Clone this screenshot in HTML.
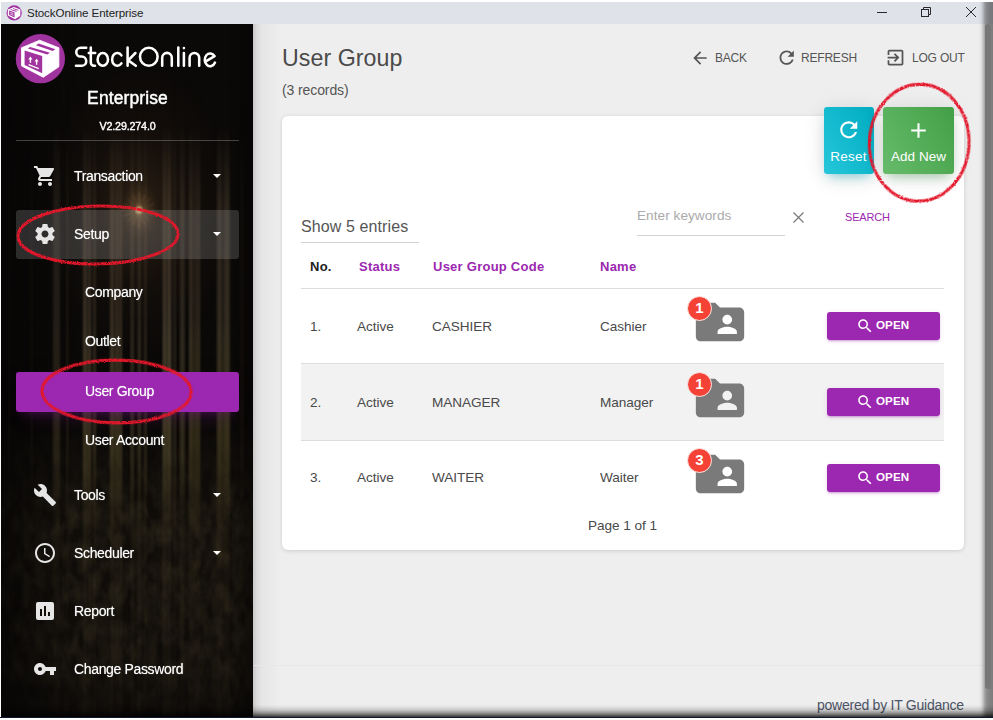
<!DOCTYPE html>
<html>
<head>
<meta charset="utf-8">
<title>StockOnline Enterprise</title>
<style>
*{box-sizing:border-box;margin:0;padding:0}
html,body{width:993px;height:720px;overflow:hidden;background:#fff;font-family:"Liberation Sans",sans-serif;}
.abs{position:absolute}
#win{position:absolute;left:0;top:0;width:993px;height:720px;overflow:hidden;background:#fff}
/* title bar */
#tbar{position:absolute;left:1px;top:2px;width:992px;height:22px;background:#dfe2e8}
#tbar .ttl{position:absolute;left:26px;top:4px;font-size:11.6px;color:#222;line-height:14px;letter-spacing:-0.1px}
/* main */
#main{position:absolute;left:253px;top:24px;width:740px;height:693px;background:linear-gradient(90deg,rgba(0,0,0,.16),rgba(0,0,0,.08) 4px,rgba(0,0,0,.035) 9px,rgba(0,0,0,.018) 18px,rgba(0,0,0,0) 27px),#eeeeee}
/* sidebar */
#side{position:absolute;left:1px;top:24px;width:252px;height:693px;background:#0b0908;overflow:hidden;color:#fff}
#side .bg{position:absolute;left:0;top:0;width:253px;height:693px}
.mi{position:absolute;left:73px;font-size:14px;line-height:16px;color:#fff;letter-spacing:-0.35px;text-shadow:0 0 1px rgba(255,255,255,.6)}
.sub{position:absolute;left:84px;font-size:14px;line-height:16px;color:#fff;letter-spacing:-0.35px;text-shadow:0 0 1px rgba(255,255,255,.6)}
.caret{position:absolute;left:212px;width:0;height:0;border-left:4px solid transparent;border-right:4px solid transparent;border-top:4px solid #fff}
.ico{position:absolute;fill:#e6e6e6}
/* header */
#h1{position:absolute;left:282px;top:44px;font-size:23.2px;line-height:28px;color:#4a4a4a;letter-spacing:0.05px}
#h2{position:absolute;left:282px;top:82px;font-size:14px;line-height:17px;color:#555;letter-spacing:-0.1px}
.tb{position:absolute;top:51px;font-size:12px;line-height:14px;color:#555;letter-spacing:-0.2px}
/* card */
#card{position:absolute;left:282px;top:116px;width:682px;height:434px;background:#fff;border-radius:6px;box-shadow:0 1px 4px rgba(0,0,0,.14)}
.btn{position:absolute;top:106.8px;height:67.5px;border-radius:3px;color:#fff;font-size:13.5px;text-align:center}
.th{position:absolute;top:259px;font-size:13px;line-height:15px;font-weight:bold;color:#9c27b0;letter-spacing:0.25px}
.td{position:absolute;font-size:13.6px;line-height:16px;color:#4a4a4a;letter-spacing:-0.05px}
.open{position:absolute;left:827px;width:113px;height:28px;border-radius:3px;background:#9c27b0;box-shadow:0 2px 2px rgba(156,39,176,.14),0 3px 1px -2px rgba(156,39,176,.2),0 1px 5px rgba(156,39,176,.12)}
.open span{position:absolute;left:49px;top:6px;font-size:11.6px;line-height:14px;color:#fff;font-weight:bold;letter-spacing:0.1px}
.open svg{position:absolute;left:29px;top:4.6px}
.fold{position:absolute;left:691px;width:58px;height:58px;fill:#7a7a7a}
.badge{position:absolute;left:687px;width:25px;height:25px;border-radius:50%;background:#f44336;border:1.5px solid #fbe9e7;color:#fff;font-weight:bold;font-size:15px;line-height:22px;text-align:center}
.hl{position:absolute;height:1px;background:#ddd}
</style>
</head>
<body>
<div id="win">
  <div id="tbar">
    <svg class="abs" style="left:5.3px;top:2.6px" width="16.7" height="16.7" viewBox="14 33 54 54"><circle cx="40.4" cy="58.7" r="24.6" fill="#a1339f"/><path d="M39.6 39.2 L60.4 47.3 L60.4 67.6 L43.3 79 L20 66.8 L20 47.3Z" fill="#fff"/><path d="M24.2 51 L41.6 56.4 L41.6 73.8 L24.2 65.4Z" fill="#a1339f"/><path d="M38.7 43.2 L55.4 49 L51.8 51 L35.1 45.2Z M30 46.6 L50 52.5 L46.4 54.6 L27.1 48.5Z" fill="#a1339f"/><path d="M28 57 L38 60.5 M28 62.5 L38 66.4" stroke="#fff" stroke-width="2.4"/></svg>
    <div class="ttl">StockOnline Enterprise</div>
    <svg class="abs" style="left:870px;top:0" width="115" height="22" viewBox="0 0 115 22" fill="none" stroke="#2a2a2a" stroke-width="1"><path d="M6 10.5 H16"/><rect x="50.5" y="7.5" width="7" height="7"/><path d="M52.5 7.5 V5.5 H59.5 V12.5 H57.5"/><path d="M95 5 L105 15 M105 5 L95 15"/></svg>
  </div>

  <div id="main"></div>
  <div id="h1">User Group</div>
  <div id="h2">(3 records)</div>
  <svg class="abs" style="left:690px;top:48px" width="20" height="20" viewBox="0 0 24 24" fill="#555"><path d="M20 11H7.83l5.59-5.59L12 4l-8 8 8 8 1.41-1.41L7.83 13H20v-2z"/></svg>
  <div class="tb" style="left:715px">BACK</div>
  <svg class="abs" style="left:775.5px;top:46.7px" width="21.4" height="21.4" viewBox="0 0 24 24" fill="#555"><path d="M17.65 6.35C16.2 4.9 14.21 4 12 4c-4.42 0-7.99 3.58-7.99 8s3.57 8 7.99 8c3.73 0 6.84-2.55 7.73-6h-2.08c-.82 2.33-3.04 4-5.65 4-3.31 0-6-2.69-6-6s2.69-6 6-6c1.66 0 3.14.69 4.22 1.78L13 11h7V4l-2.35 2.35z"/></svg>
  <div class="tb" style="left:801px">REFRESH</div>
  <svg class="abs" style="left:885px;top:47px" width="21" height="21" viewBox="0 0 24 24" fill="#555"><path d="M10.09 15.59L11.5 17l5-5-5-5-1.41 1.41L12.67 11H3v2h9.67l-2.58 2.59zM19 3H5c-1.11 0-2 .9-2 2v4h2V5h14v14H5v-4H3v4c0 1.1.89 2 2 2h14c1.1 0 2-.9 2-2V5c0-1.1-.9-2-2-2z"/></svg>
  <div class="tb" style="left:912px">LOG OUT</div>

  <div id="card"></div>
  <div class="btn" style="left:823.5px;width:50.4px;background:linear-gradient(60deg,#26c6da,#00acc1);box-shadow:0 4px 20px rgba(0,0,0,.14),0 7px 10px -5px rgba(0,188,212,.4)">
    <svg class="abs" style="left:12.3px;top:10.6px" width="25.5" height="25.5" viewBox="0 0 24 24" fill="#fff"><path d="M17.65 6.35C16.2 4.9 14.21 4 12 4c-4.42 0-7.99 3.58-7.99 8s3.57 8 7.99 8c3.73 0 6.84-2.55 7.73-6h-2.08c-.82 2.33-3.04 4-5.65 4-3.31 0-6-2.69-6-6s2.69-6 6-6c1.66 0 3.14.69 4.22 1.78L13 11h7V4l-2.35 2.35z"/></svg>
    <div class="abs" style="left:0;top:42px;width:50px;line-height:16px;letter-spacing:0.2px">Reset</div>
  </div>
  <div class="btn" style="left:883px;width:71px;background:linear-gradient(60deg,#66bb6a,#43a047);box-shadow:0 4px 20px rgba(0,0,0,.14),0 7px 10px -5px rgba(76,175,80,.4)">
    <svg class="abs" style="left:23.3px;top:10.8px" width="25" height="25" viewBox="0 0 24 24" fill="#fff"><path d="M19 13h-6v6h-2v-6H5v-2h6V5h2v6h6v2z"/></svg>
    <div class="abs" style="left:0;top:42px;width:71px;line-height:16px;letter-spacing:0px">Add New</div>
  </div>
  <svg class="abs" style="left:860px;top:76px" width="120" height="135" viewBox="860 76 120 135" fill="none" stroke="#e3182c" stroke-width="3.1"><ellipse filter="url(#rgh)" cx="919.2" cy="142.8" rx="49.8" ry="58.4" transform="rotate(3 919.2 142.8)"/></svg>

  <div class="abs" style="left:301px;top:217px;font-size:16px;line-height:19px;color:#555;letter-spacing:0.1px">Show 5 entries</div>
  <div class="hl" style="left:301px;top:242px;width:118px;background:#d2d2d2"></div>
  <div class="abs" style="left:637px;top:208px;font-size:13.6px;line-height:16px;color:#aaa;letter-spacing:0.05px">Enter keywords</div>
  <div class="hl" style="left:637px;top:235px;width:148px;background:#d2d2d2"></div>
  <svg class="abs" style="left:792px;top:211px" width="13" height="13" viewBox="0 0 13 13" stroke="#777" stroke-width="1.15" fill="none"><path d="M1.5 1.5 L11.5 11.5 M11.5 1.5 L1.5 11.5"/></svg>
  <div class="abs" style="left:845px;top:211px;font-size:11px;line-height:13px;color:#9c27b0;letter-spacing:-0.2px">SEARCH</div>

  <div class="th" style="left:310px;color:#222">No.</div>
  <div class="th" style="left:359px">Status</div>
  <div class="th" style="left:433px">User Group Code</div>
  <div class="th" style="left:600px">Name</div>
  <div class="hl" style="left:301px;top:288px;width:643px"></div>
<div class="td" style="left:310px;top:319px">1.</div><div class="td" style="left:357px;top:319px">Active</div><div class="td" style="left:432px;top:319px">CASHIER</div><div class="td" style="left:600px;top:319px">Cashier</div>
<svg class="fold" style="top:293px" viewBox="0 0 24 24"><path d="M20 6h-8l-2-2H4c-1.1 0-1.99.9-1.99 2L2 18c0 1.1.9 2 2 2h16c1.1 0 2-.9 2-2V8c0-1.1-.9-2-2-2zm-5 3c1.1 0 2 .9 2 2s-.9 2-2 2-2-.9-2-2 .9-2 2-2zm4 8h-8v-1c0-1.33 2.67-2 4-2s4 .67 4 2v1z"/></svg><div class="badge" style="top:296px">1</div>
<div class="open" style="top:312px"><svg width="18" height="18" viewBox="0 0 24 24" fill="#fff"><path d="M15.5 14h-.79l-.28-.27C15.41 12.59 16 11.11 16 9.5 16 5.91 13.09 3 9.5 3S3 5.91 3 9.5 5.91 16 9.5 16c1.61 0 3.09-.59 4.23-1.57l.27.28v.79l5 4.99L20.49 19l-4.99-5zm-6 0C7.01 14 5 11.99 5 9.5S7.01 5 9.5 5 14 7.01 14 9.5 11.99 14 9.5 14z"/></svg><span>OPEN</span></div>
<div class="abs" style="left:301px;top:364px;width:643px;height:76px;background:#f2f2f2"></div>
<div class="hl" style="left:301px;top:363px;width:643px"></div>
<div class="td" style="left:310px;top:395px">2.</div><div class="td" style="left:357px;top:395px">Active</div><div class="td" style="left:432px;top:395px">MANAGER</div><div class="td" style="left:600px;top:395px">Manager</div>
<svg class="fold" style="top:369px" viewBox="0 0 24 24"><path d="M20 6h-8l-2-2H4c-1.1 0-1.99.9-1.99 2L2 18c0 1.1.9 2 2 2h16c1.1 0 2-.9 2-2V8c0-1.1-.9-2-2-2zm-5 3c1.1 0 2 .9 2 2s-.9 2-2 2-2-.9-2-2 .9-2 2-2zm4 8h-8v-1c0-1.33 2.67-2 4-2s4 .67 4 2v1z"/></svg><div class="badge" style="top:372px">1</div>
<div class="open" style="top:388px"><svg width="18" height="18" viewBox="0 0 24 24" fill="#fff"><path d="M15.5 14h-.79l-.28-.27C15.41 12.59 16 11.11 16 9.5 16 5.91 13.09 3 9.5 3S3 5.91 3 9.5 5.91 16 9.5 16c1.61 0 3.09-.59 4.23-1.57l.27.28v.79l5 4.99L20.49 19l-4.99-5zm-6 0C7.01 14 5 11.99 5 9.5S7.01 5 9.5 5 14 7.01 14 9.5 11.99 14 9.5 14z"/></svg><span>OPEN</span></div>
<div class="hl" style="left:301px;top:440px;width:643px"></div>
<div class="td" style="left:310px;top:470px">3.</div><div class="td" style="left:357px;top:470px">Active</div><div class="td" style="left:432px;top:470px">WAITER</div><div class="td" style="left:600px;top:470px">Waiter</div>
<svg class="fold" style="top:445px" viewBox="0 0 24 24"><path d="M20 6h-8l-2-2H4c-1.1 0-1.99.9-1.99 2L2 18c0 1.1.9 2 2 2h16c1.1 0 2-.9 2-2V8c0-1.1-.9-2-2-2zm-5 3c1.1 0 2 .9 2 2s-.9 2-2 2-2-.9-2-2 .9-2 2-2zm4 8h-8v-1c0-1.33 2.67-2 4-2s4 .67 4 2v1z"/></svg><div class="badge" style="top:448px">3</div>
<div class="open" style="top:464px"><svg width="18" height="18" viewBox="0 0 24 24" fill="#fff"><path d="M15.5 14h-.79l-.28-.27C15.41 12.59 16 11.11 16 9.5 16 5.91 13.09 3 9.5 3S3 5.91 3 9.5 5.91 16 9.5 16c1.61 0 3.09-.59 4.23-1.57l.27.28v.79l5 4.99L20.49 19l-4.99-5zm-6 0C7.01 14 5 11.99 5 9.5S7.01 5 9.5 5 14 7.01 14 9.5 11.99 14 9.5 14z"/></svg><span>OPEN</span></div>

  <div class="td" style="left:588px;top:518px">Page 1 of 1</div>

  <div class="hl" style="left:254px;top:665px;width:731px;background:#e7e7e7"></div>
  <div class="abs" style="left:817px;top:697px;font-size:14px;line-height:16px;color:#4d5568;letter-spacing:-0.25px">powered by IT Guidance</div>

  <div id="side">
    <svg class="bg" width="253" height="693" viewBox="0 0 253 693">
      <defs>
        <linearGradient id="vm" x1="0" y1="0" x2="0" y2="1">
          <stop offset="0" stop-color="#fff" stop-opacity="0"/>
          <stop offset="0.15" stop-color="#fff" stop-opacity="0.03"/>
          <stop offset="0.26" stop-color="#fff" stop-opacity="0.8"/>
          <stop offset="0.45" stop-color="#fff" stop-opacity="1"/>
          <stop offset="0.62" stop-color="#fff" stop-opacity="0.8"/>
          <stop offset="0.70" stop-color="#fff" stop-opacity="0.35"/>
          <stop offset="1" stop-color="#fff" stop-opacity="0.15"/>
        </linearGradient>
        <linearGradient id="vm2" x1="0" y1="0" x2="0" y2="1"><stop offset="0.42" stop-color="#fff" stop-opacity="0"/><stop offset="0.56" stop-color="#fff" stop-opacity="1"/><stop offset="0.66" stop-color="#fff" stop-opacity="0.8"/><stop offset="0.74" stop-color="#fff" stop-opacity="0.15"/><stop offset="1" stop-color="#fff" stop-opacity="0"/></linearGradient>
        <mask id="mk2"><rect x="0" y="0" width="253" height="693" fill="url(#vm2)"/></mask>
        <mask id="mk"><rect x="0" y="0" width="253" height="693" fill="url(#vm)"/></mask>
        <radialGradient id="glow" cx="138" cy="186" r="120" gradientUnits="userSpaceOnUse" gradientTransform="translate(138 186) scale(0.8 1.25) translate(-138 -186)">
          <stop offset="0" stop-color="#a07a4c" stop-opacity="0.8"/>
          <stop offset="0.05" stop-color="#6e5030" stop-opacity="0.55"/>
          <stop offset="0.2" stop-color="#4a3420" stop-opacity="0.38"/>
          <stop offset="0.55" stop-color="#2e2014" stop-opacity="0.22"/>
          <stop offset="1" stop-color="#20160e" stop-opacity="0"/>
        </radialGradient>
        <linearGradient id="vig" x1="0" y1="0" x2="1" y2="0"><stop offset="0" stop-color="#050404" stop-opacity=".75"/><stop offset="0.18" stop-color="#050404" stop-opacity=".25"/><stop offset="0.3" stop-color="#050404" stop-opacity="0"/><stop offset="0.9" stop-color="#050404" stop-opacity="0"/><stop offset="1" stop-color="#050404" stop-opacity=".55"/></linearGradient>
        <filter id="bl" x="-5%" y="-5%" width="110%" height="110%"><feGaussianBlur stdDeviation="0.8"/></filter>
        <filter id="nz" x="0" y="0" width="100%" height="100%">
          <feTurbulence type="fractalNoise" baseFrequency="0.09 0.05" numOctaves="3" seed="7" result="t"/>
          <feColorMatrix type="matrix" values="0 0 0 0 0.24  0 0 0 0 0.19  0 0 0 0 0.08  0.8 0.8 0 0 -0.55"/>
        </filter>
        <linearGradient id="fm" x1="0" y1="0" x2="0" y2="1">
          <stop offset="0.58" stop-color="#fff" stop-opacity="0"/>
          <stop offset="0.72" stop-color="#fff" stop-opacity="1"/>
          <stop offset="0.93" stop-color="#fff" stop-opacity="0.8"/>
          <stop offset="1" stop-color="#fff" stop-opacity="0.2"/>
        </linearGradient>
        <mask id="mf"><rect x="0" y="0" width="253" height="693" fill="url(#fm)"/></mask>
      </defs>
      <rect width="253" height="693" fill="#0b0908"/>
      <g mask="url(#mk)"><g filter="url(#bl)" fill="#4a4030" opacity=".95"><rect x="52.0" y="60" width="7.0" height="640" opacity="0.5"/><rect x="65.5" y="60" width="1.7" height="640" opacity="0.4"/><rect x="82.0" y="60" width="8.0" height="640" opacity="0.8"/><rect x="92.0" y="60" width="3.0" height="640" opacity="0.55"/><rect x="109.0" y="60" width="12.0" height="640" opacity="0.8"/><rect x="129.6" y="60" width="3.2" height="640" opacity="0.6"/><rect x="136.7" y="60" width="3.2" height="640" opacity="0.6"/><rect x="143.0" y="60" width="2.7" height="640" opacity="0.5"/><rect x="161.8" y="60" width="8.4" height="640" opacity="1.0"/><rect x="172.7" y="60" width="2.0" height="640" opacity="0.6"/><rect x="179.0" y="60" width="4.7" height="640" opacity="0.6"/><rect x="188.0" y="60" width="11.0" height="640" opacity="0.7"/><rect x="216.0" y="60" width="12.8" height="640" opacity="0.7"/><rect x="7.0" y="60" width="3.0" height="640" opacity="0.15"/><rect x="29.0" y="60" width="3.0" height="640" opacity="0.15"/><rect x="239.0" y="60" width="4.0" height="640" opacity="0.15"/></g><g filter="url(#bl)" fill="#0b0908" opacity=".7"><rect x="113" y="60" width="1.5" height="640"/><rect x="117.5" y="60" width="1.2" height="640"/><rect x="165" y="60" width="1.2" height="640"/><rect x="192" y="60" width="1.5" height="640"/><rect x="195.5" y="60" width="1" height="640"/><rect x="221" y="60" width="1.5" height="640"/><rect x="86" y="60" width="1.2" height="640"/></g></g><g mask="url(#mk2)"><g filter="url(#bl)" fill="#4a4220" opacity=".55"><rect x="52.0" y="60" width="7.0" height="640" opacity="0.5"/><rect x="65.5" y="60" width="1.7" height="640" opacity="0.4"/><rect x="82.0" y="60" width="8.0" height="640" opacity="0.8"/><rect x="92.0" y="60" width="3.0" height="640" opacity="0.55"/><rect x="109.0" y="60" width="12.0" height="640" opacity="0.8"/><rect x="129.6" y="60" width="3.2" height="640" opacity="0.6"/><rect x="136.7" y="60" width="3.2" height="640" opacity="0.6"/><rect x="143.0" y="60" width="2.7" height="640" opacity="0.5"/><rect x="161.8" y="60" width="8.4" height="640" opacity="1.0"/><rect x="172.7" y="60" width="2.0" height="640" opacity="0.6"/><rect x="179.0" y="60" width="4.7" height="640" opacity="0.6"/><rect x="188.0" y="60" width="11.0" height="640" opacity="0.7"/><rect x="216.0" y="60" width="12.8" height="640" opacity="0.7"/><rect x="7.0" y="60" width="3.0" height="640" opacity="0.15"/><rect x="29.0" y="60" width="3.0" height="640" opacity="0.15"/><rect x="239.0" y="60" width="4.0" height="640" opacity="0.15"/></g></g>
      <rect width="253" height="693" fill="url(#glow)"/><g transform="translate(138 186)" stroke="#d8b27a" stroke-width="0.8" opacity=".32" filter="url(#bl)"><path d="M-16 0 H16 M0 -18 V18 M-11 -11 L11 11 M-11 11 L11 -11 M-15 -6 L15 6 M-6 -15 L6 15 M-15 6 L15 -6 M-6 15 L6 -15"/></g><circle cx="138" cy="186" r="3.5" fill="#e8c890" opacity=".55" filter="url(#bl)"/>
      <g mask="url(#mf)"><rect width="253" height="693" fill="#17120a" opacity=".45"/><rect width="253" height="693" filter="url(#nz)" opacity=".3"/></g>
      <rect width="253" height="693" fill="url(#vig)"/>
    </svg>
    <!-- logo -->
    <svg class="abs" style="left:13px;top:9px" width="54" height="54" viewBox="14 33 54 54">
      <circle cx="40.4" cy="58.7" r="24.6" fill="#a1339f"/>
      <path d="M39.6 40.2 L58.9 47.8 L58.9 66.8 L43.3 77.3 L21.5 65.9 L21.5 47.8Z" fill="#fff" stroke="#fff" stroke-width="0.8" stroke-linejoin="round"/>
      <path d="M24.6 50.5 L42.2 55.9 L42.2 73.2 L24.6 64.9Z" fill="#a1339f"/>
      <path d="M38.7 43.6 L55.4 49.3 L52.6 50.9 L35.9 45.2Z M30 47 L50 52.7 L47.2 54.4 L27.9 48.5Z" fill="#a1339f"/>
      <path d="M30.4 56.6 l2.1 2.9 h-1.4 v3.2 h-1.4 v-3.2 h-1.4z M36.6 58.7 l2.1 2.9 h-1.4 v3.2 h-1.4 v-3.2 h-1.4z" fill="#fff"/>
      <path d="M28.6 64.6 L38.8 68.6" stroke="#fff" stroke-width="1.3"/>
    </svg>
    <svg class="abs" style="left:69px;top:14px" width="152" height="36" viewBox="70 38 152 36" fill="none" stroke="#fff" stroke-width="2.55" stroke-linecap="round" stroke-linejoin="round">
      <path d="M86.2 47.8 H80.6 A4.35 4.35 0 0 0 80.6 56.5 H81.6 A4.65 4.65 0 0 1 81.6 65.8 H76"/>
      <path d="M90.8 47.6 V62.6 A3.2 3.2 0 0 0 94 65.8 H95 M88.8 53 H95.2"/>
      <ellipse cx="102.8" cy="59.4" rx="5.2" ry="6.4"/>
      <path d="M121.4 55.4 A5.2 6.4 0 1 0 121.4 63.4"/>
      <path d="M127.6 47.6 V65.8 M135.4 53 L128.2 60.4 L135.8 65.8"/>
      <ellipse cx="148.8" cy="56.75" rx="8.8" ry="9.05"/>
      <path d="M162.2 65.8 V57.7 A4.8 4.8 0 0 1 171.8 57.7 V65.8"/>
      <path d="M178.3 47.6 V65.8"/>
      <path d="M183.9 53 V65.8 M183.9 47.9 V48.1"/>
      <path d="M189.6 65.8 V57.7 A4.8 4.8 0 0 1 199.2 57.7 V65.8"/>
      <path d="M205 61.8 L214.6 56.2 A5.4 6.4 0 1 0 215 62.6"/>
    </svg>
    <div class="abs" style="left:0;top:64px;width:253px;text-align:center;font-size:17.5px;line-height:20px;color:#fff;letter-spacing:0.1px;-webkit-text-stroke:0.35px #fff;text-shadow:0 0 1px rgba(255,255,255,.4)">Enterprise</div>
    <div class="abs" style="left:0;top:96px;width:253px;text-align:center;font-size:10.7px;line-height:13px;color:#fff;letter-spacing:-0.15px;-webkit-text-stroke:0.3px #fff;text-shadow:0 0 1px rgba(255,255,255,.4)">V2.29.274.0</div>
    <div class="abs" style="left:15px;top:116px;width:223px;height:1px;background:rgba(180,180,180,.35)"></div>

    <div class="abs" style="left:15px;top:186px;width:223px;height:49px;border-radius:3px;background:rgba(200,200,200,.2)"></div>
    <div class="abs" style="left:15px;top:348px;width:223px;height:39.5px;border-radius:3px;background:#9c27b0;box-shadow:0 12px 20px -10px rgba(156,39,176,.28),0 4px 20px rgba(0,0,0,.12),0 7px 8px -5px rgba(156,39,176,.2)"></div>

    <svg class="ico" style="left:32px;top:140px" width="24" height="24" viewBox="0 0 24 24"><path d="M7 18c-1.1 0-1.99.9-1.99 2S5.9 22 7 22s2-.9 2-2-.9-2-2-2zM1 2v2h2l3.6 7.59-1.35 2.45c-.16.28-.25.61-.25.96 0 1.1.9 2 2 2h12v-2H7.42c-.14 0-.25-.11-.25-.25l.03-.12.9-1.63h7.45c.75 0 1.41-.41 1.75-1.03l3.58-6.49c.08-.14.12-.31.12-.48 0-.55-.45-1-1-1H5.21l-.94-2H1zm16 16c-1.1 0-1.99.9-1.99 2s.89 2 1.99 2 2-.9 2-2-.9-2-2-2z"/></svg>
    <div class="mi" style="top:144px">Transaction</div><div class="caret" style="top:150px"></div>

    <svg class="ico" style="left:32px;top:198px" width="24" height="24" viewBox="0 0 24 24"><path d="M19.43 12.98c.04-.32.07-.64.07-.98s-.03-.66-.07-.98l2.11-1.65c.19-.15.24-.42.12-.64l-2-3.46c-.12-.22-.39-.3-.61-.22l-2.49 1c-.52-.4-1.08-.73-1.69-.98l-.38-2.65C14.46 2.18 14.25 2 14 2h-4c-.25 0-.46.18-.49.42l-.38 2.65c-.61.25-1.17.59-1.69.98l-2.49-1c-.23-.09-.49 0-.61.22l-2 3.46c-.13.22-.07.49.12.64l2.11 1.65c-.04.32-.07.65-.07.98s.03.66.07.98l-2.11 1.65c-.19.15-.24.42-.12.64l2 3.46c.12.22.39.3.61.22l2.49-1c.52.4 1.08.73 1.69.98l.38 2.65c.03.24.24.42.49.42h4c.25 0 .46-.18.49-.42l.38-2.65c.61-.25 1.17-.59 1.69-.98l2.49 1c.23.09.49 0 .61-.22l2-3.46c.12-.22.07-.49-.12-.64l-2.11-1.65zM12 15.5c-1.93 0-3.5-1.57-3.5-3.5s1.57-3.5 3.5-3.5 3.5 1.57 3.5 3.5-1.57 3.5-3.5 3.5z"/></svg>
    <div class="mi" style="top:202px">Setup</div><div class="caret" style="top:208px"></div>

    <div class="sub" style="top:260px">Company</div>
    <div class="sub" style="top:309px">Outlet</div>
    <div class="sub" style="top:359px">User Group</div>
    <div class="sub" style="top:408px">User Account</div>

    <svg class="ico" style="left:32px;top:458.6px" width="24" height="24" viewBox="0 0 24 24"><path d="M22.7 19l-9.1-9.1c.9-2.3.4-5-1.5-6.9-2-2-5-2.4-7.4-1.3L9 6 6 9 1.6 4.7C.4 7.1.9 10.1 2.9 12.1c1.9 1.9 4.6 2.4 6.9 1.5l9.1 9.1c.4.4 1 .4 1.4 0l2.3-2.3c.5-.4.5-1.1.1-1.4z"/></svg>
    <div class="mi" style="top:463px">Tools</div><div class="caret" style="top:469px"></div>

    <svg class="ico" style="left:32px;top:516.8px" width="24" height="24" viewBox="0 0 24 24"><path d="M11.99 2C6.47 2 2 6.48 2 12s4.47 10 9.99 10C17.52 22 22 17.52 22 12S17.52 2 11.99 2zM12 20c-4.42 0-8-3.58-8-8s3.58-8 8-8 8 3.58 8 8-3.58 8-8 8zm.5-13H11v6l5.25 3.15.75-1.23-4.5-2.67z"/></svg>
    <div class="mi" style="top:521px">Scheduler</div><div class="caret" style="top:527px"></div>

    <svg class="ico" style="left:32px;top:575.2px" width="24" height="24" viewBox="0 0 24 24"><path d="M19 3H5c-1.1 0-2 .9-2 2v14c0 1.1.9 2 2 2h14c1.1 0 2-.9 2-2V5c0-1.1-.9-2-2-2zM9 17H7v-7h2v7zm4 0h-2V7h2v10zm4 0h-2v-4h2v4z"/></svg>
    <div class="mi" style="top:579px">Report</div>

    <svg class="ico" style="left:32px;top:633.3px" width="24" height="24" viewBox="0 0 24 24"><path d="M12.65 10C11.83 7.67 9.61 6 7 6c-3.31 0-6 2.69-6 6s2.69 6 6 6c2.61 0 4.83-1.67 5.65-4H17v4h4v-4h2v-4H12.65zM7 14c-1.1 0-2-.9-2-2s.9-2 2-2 2 .9 2 2-.9 2-2 2z"/></svg>
    <div class="mi" style="top:637px">Change Password</div>

    <!-- red annotation ellipses -->
    <svg class="abs" style="left:0;top:0" width="253" height="693" viewBox="1 24 253 693" fill="none" stroke="#e3182c" stroke-width="3.1"><defs><filter id="rgh" x="-5%" y="-5%" width="110%" height="110%"><feTurbulence type="fractalNoise" baseFrequency="0.8" numOctaves="2" seed="3" result="n"/><feDisplacementMap in="SourceGraphic" in2="n" scale="2.2" xChannelSelector="R" yChannelSelector="G" result="d"/><feColorMatrix in="n" type="matrix" values="0 0 0 0 0 0 0 0 0 0 0 0 0 0 0 0 0 2.8 0 -0.3" result="a"/><feComposite in="d" in2="a" operator="in"/></filter></defs>
      <g filter="url(#rgh)"><ellipse cx="98" cy="235" rx="80" ry="29" transform="rotate(-1 98 235)"/>
      <ellipse cx="116.6" cy="391.5" rx="74.5" ry="31.4" transform="rotate(0.5 116.5 391)"/></g>
    </svg>
  </div>
  <!-- window edge shadows -->
  <div class="abs" style="left:978px;top:2px;width:15px;height:715px;background:linear-gradient(90deg,rgba(0,0,0,0),rgba(0,0,0,.02) 2px,rgba(0,0,0,.10) 4px,rgba(0,0,0,.25) 6px,rgba(0,0,0,.34) 7px,rgba(0,0,0,.44) 10px,rgba(0,0,0,.48) 15px)"></div>
  <div class="abs" style="left:985px;top:24px;width:6px;height:665px;border-radius:3px;background:#777"></div>
  <div class="abs" style="left:1px;top:702px;width:992px;height:15px;background:linear-gradient(180deg,rgba(0,0,0,0) 2.5px,rgba(0,0,0,.04) 4.7px,rgba(0,0,0,.16) 8px,rgba(0,0,0,.40) 11.3px,rgba(0,0,0,.66) 13.8px,rgba(0,0,0,.78) 15px)"></div>
  <div class="abs" style="left:0;top:717px;width:993px;height:1px;background:#0f1a2b"></div>
</div>
</body>
</html>
